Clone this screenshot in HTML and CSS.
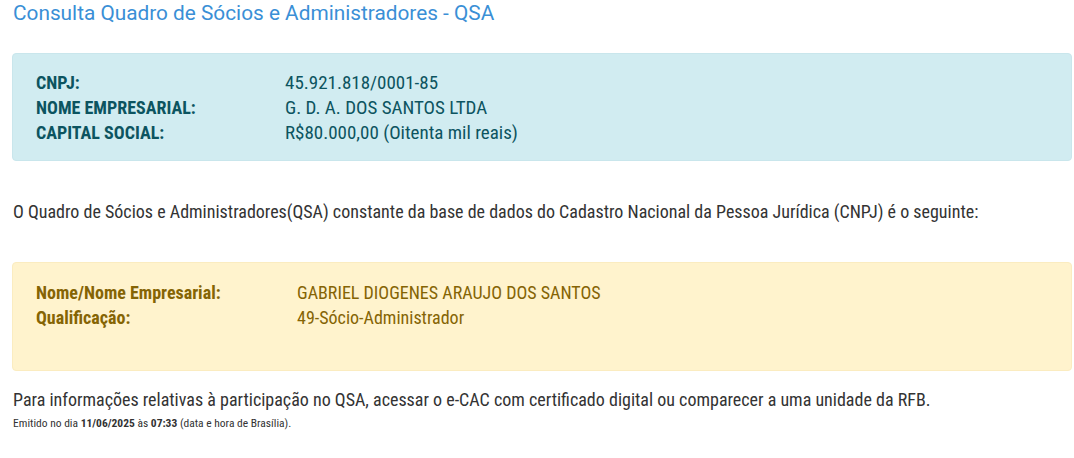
FILE: index.html
```html
<!DOCTYPE html>
<html lang="pt-BR">
<head>
<meta charset="utf-8">
<title>Consulta QSA</title>
<link rel="stylesheet" href="styles.css">
</head>
<body>
<main class="page">
  <h1 class="title">Consulta Quadro de Sócios e Administradores - QSA</h1>

  <section class="box box-info">
    <div class="grid grid-info">
      <div class="label">CNPJ:</div><div class="value">45.921.818/0001-85</div>
      <div class="label">NOME EMPRESARIAL:</div><div class="value">G. D. A. DOS SANTOS LTDA</div>
      <div class="label">CAPITAL SOCIAL:</div><div class="value">R$80.000,00 (Oitenta mil reais)</div>
    </div>
  </section>

  <p class="text intro">O Quadro de Sócios e Administradores(QSA) constante da base de dados do Cadastro Nacional da Pessoa Jurídica (CNPJ) é o seguinte:</p>

  <section class="box box-warning">
    <div class="grid grid-warning">
      <div class="label">Nome/Nome Empresarial:</div><div class="value">GABRIEL DIOGENES ARAUJO DOS SANTOS</div>
      <div class="label">Qualificação:</div><div class="value">49-Sócio-Administrador</div>
      <div class="label">&nbsp;</div><div class="value">&nbsp;</div>
    </div>
  </section>

  <p class="text info">Para informações relativas à participação no QSA, acessar o e-CAC com certificado digital ou comparecer a uma unidade da RFB.</p>
  <p class="small">Emitido no dia <b>11/06/2025</b> às <b>07:33</b> (data e hora de Brasília).</p>
</main>
</body>
</html>
```
FILE: styles.css
```css
html, body {
  margin: 0;
  padding: 0;
  background: #ffffff;
}
body {
  font-family: Roboto, "Noto Sans", sans-serif;
  font-stretch: condensed;
  color: #333333;
}
.page {
  padding: 0 2px 0 12px;
}
.title {
  margin: 0;
  padding: 1px 0 0 1px;
  font-size: 20.8px;
  font-stretch: normal;
  line-height: 25px;
  font-weight: 400;
  color: #3a8fd6;
}
.box {
  border-radius: 4px;
  border: 1px solid transparent;
  padding: 16px 23px 15px;
}
.box-info {
  margin-top: 27px;
  background: #d1ecf1;
  border-color: #c9e6ec;
  color: #0c5460;
}
.box-info .value {
  font-size: 19px;
}
.box-warning {
  margin-top: 0;
  background: #fff3cd;
  border-color: #fbecc0;
  color: #856404;
  padding-top: 17px;
}
.grid {
  display: grid;
  font-size: 18px;
  line-height: 25px;
}
.grid-info {
  grid-template-columns: 249px 1fr;
}
.grid-warning {
  grid-template-columns: 261px 1fr;
}
.label {
  font-weight: 700;
}
.value {
  font-weight: 400;
}
.text {
  margin: 0;
  font-size: 18px;
  line-height: 25px;
  padding-left: 1px;
}
.intro {
  padding: 38px 0 38px 1px;
}
.info {
  padding-top: 16px;
}
.small {
  margin: 3px 0 0;
  padding-left: 1px;
  font-size: 11.5px;
  line-height: 16px;
  color: #333333;
}
.small b {
  font-weight: 700;
}
```
